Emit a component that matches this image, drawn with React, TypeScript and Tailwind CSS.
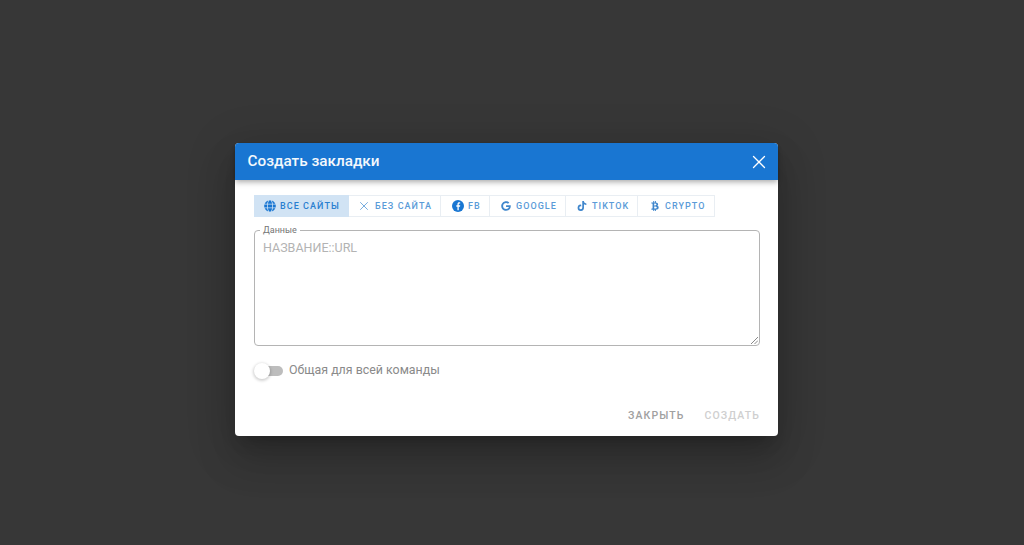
import React from "react";
import { FaGlobe, FaGoogle, FaTiktok, FaBtc } from "react-icons/fa";
import { X } from "lucide-react";

const FbIcon = () => (
  <svg width="12" height="12" viewBox="0 0 13 13">
    <circle cx="6.5" cy="6.5" r="6.5" fill="#1976d2" />
    <path d="M7.3 11V7.2h1.4l.2-1.5H7.3v-1c0-.5.2-.8.8-.8h.8V2.6C8.7 2.5 8.3 2.5 7.9 2.5c-1.2 0-2 .7-2 2v1.2H4.7v1.5h1.2V11z" fill="#fff" />
  </svg>
);

const tabs = [
  { label: "ВСЕ САЙТЫ", w: "w-[95px]", pl: "pl-[9px] gap-[4px]", active: true, icon: <FaGlobe className="w-[12px] h-[12px] text-[#1976d2]" /> },
  { label: "БЕЗ САЙТА", w: "w-[92px]", pl: "pl-[8px] gap-[4px]", icon: <X className="w-[14px] h-[14px] text-[#5a9bd8]" strokeWidth={1.4} /> },
  { label: "FB", w: "w-[49px]", pl: "pl-[11px] gap-[4px]", icon: <FbIcon /> },
  { label: "GOOGLE", w: "w-[76px]", pl: "pl-[11px] gap-[5px]", icon: <FaGoogle className="w-[10px] h-[10px] text-[#3f86cc]" /> },
  { label: "TIKTOK", w: "w-[72px]", pl: "pl-[11px] gap-[5px]", icon: <FaTiktok className="w-[10px] h-[10px] text-[#3f86cc]" /> },
  { label: "CRYPTO", w: "w-[77px]", pl: "pl-[12px] gap-[5px]", icon: <FaBtc className="w-[10px] h-[10px] text-[#3f86cc]" /> },
];

export default function App() {
  return (
    <div className="min-h-[545px] bg-[#373737] flex items-center justify-center pr-[11px] pt-[34px] font-['Roboto',sans-serif]">
      <div className="w-[543px] h-[293px] bg-white rounded-[4px] shadow-[0_11px_15px_-7px_rgba(0,0,0,0.2),0_24px_38px_3px_rgba(0,0,0,0.14),0_9px_46px_8px_rgba(0,0,0,0.12)] flex flex-col">
        <div className="h-[37px] bg-[#1976d2] rounded-t-[4px] flex items-center justify-between pl-[13px] pr-[8px] shadow-[0_2px_4px_-1px_rgba(0,0,0,0.2),0_4px_5px_0_rgba(0,0,0,0.14)]">
          <span className="text-white text-[15.3px] font-medium leading-none pt-[1px] opacity-95 -ml-[0.5px]">Создать закладки</span>
          <X className="w-[22px] h-[22px] text-white" strokeWidth={1.4} />
        </div>
        <div className="flex-1 flex flex-col pl-[19px] pr-[18px] pt-[15px]">
          <div className="flex h-[22px] w-fit">
            {tabs.map((t, i) => (
              <div
                key={t.label}
                className={`${t.w} ${t.pl} flex items-center border ${t.active ? "bg-[#d1e3f4] border-[#d1e3f4] text-[#2a7fd0]" : "border-[#e9eef3] text-[#5a9bd8]"} ${i > 0 ? "border-l-0" : ""} text-[9px] font-medium tracking-[1.05px] leading-none whitespace-nowrap`}
              >
                {t.icon}
                <span className="pt-[1px]">{t.label}</span>
              </div>
            ))}
          </div>
          <div className="mt-[13px] h-[116px] border border-[#b4b4b4] rounded-[4px] relative">
            <span className="absolute -top-[6px] left-[5px] bg-white px-[3px] text-[9px] text-[#757575] leading-[11px]">Данные</span>
            <div className="text-[12.5px] text-[#b3b3b3] leading-none pl-[8px] pt-[11px]">НАЗВАНИЕ::URL</div>
            <svg className="absolute right-[1px] bottom-[1px]" width="8" height="8" viewBox="0 0 8 8">
              <path d="M1 8 L8 1 M4.5 8 L8 4.5" stroke="#8a8a8a" strokeWidth="1" />
            </svg>
          </div>
          <div className="flex items-center mt-[14px] h-[22px]">
            <div className="relative w-[29px] h-[16px] flex items-center">
              <div className="ml-[1px] w-[28px] h-[10px] rounded-full bg-[#bdbdbd]" />
              <div className="absolute left-0 top-0 w-[16px] h-[16px] rounded-full bg-white shadow-[0_1px_3px_1px_rgba(0,0,0,0.18)]" />
            </div>
            <span className="ml-[6px] text-[12.4px] text-[#8a8a8a] leading-none pb-[1px]">Общая для всей команды</span>
          </div>
          <div className="flex justify-end items-center mt-[29px] gap-[20px] text-[10.5px] font-medium tracking-[1.1px] leading-none">
            <span className="text-[#a0a0a0]">ЗАКРЫТЬ</span>
            <span className="text-[#cfcfcf]">СОЗДАТЬ</span>
          </div>
        </div>
      </div>
    </div>
  );
}
